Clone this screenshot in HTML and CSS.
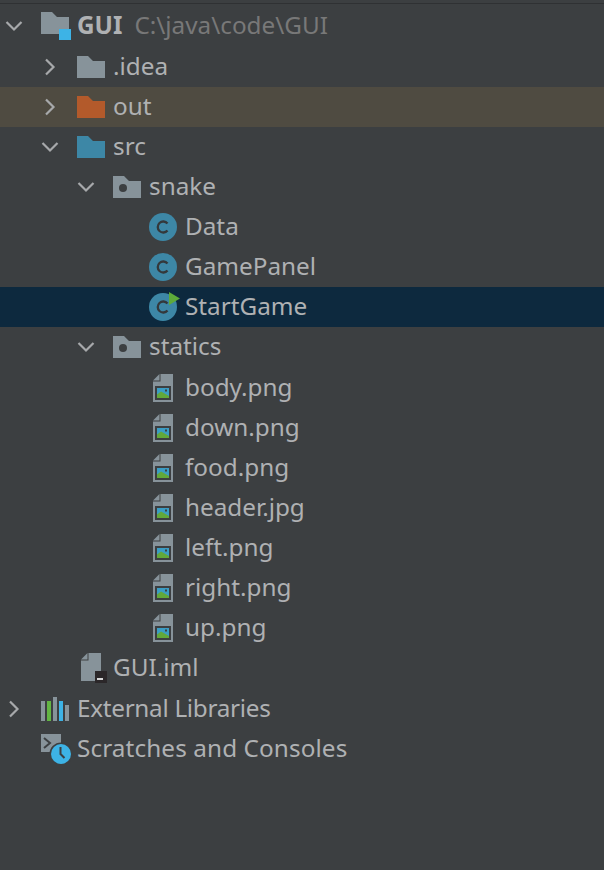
FILE: index.html
```html
<!DOCTYPE html>
<html lang="en">
<head>
  <meta charset="UTF-8">
  <meta name="viewport" content="width=device-width, initial-scale=1.0">
  <title>Project Tree</title>
  <link rel="stylesheet" href="styles.css">
</head>
<body>

  <!-- Shared icons -->
  <svg class="defs" width="0" height="0">
    <symbol id="open" viewBox="0 0 20 20"><path d="M2.500 6l7.500 7.500L17.500 6" fill="none" stroke="#a7a9ab" stroke-width="2.200"/></symbol>
    <symbol id="closed" viewBox="0 0 20 20"><path d="M6 2.500l7.500 7.500L6 17.500" fill="none" stroke="#a7a9ab" stroke-width="2.200"/></symbol>
    <symbol id="folder" viewBox="0 0 28 22"><path d="M0 0h11l5 5h12v17H0z"/></symbol>
    <symbol id="package" viewBox="0 0 28 22"><path d="M0 0h11l5 5h12v17H0z" fill="#87939a"/><circle cx="10" cy="12" r="4" fill="#3c3f41"/></symbol>
    <symbol id="class" viewBox="0 0 28 28"><circle cx="14" cy="14" r="14" fill="#3d87a6"/><path d="M18.500 10.500A5.500 5.500 0 1 0 18.500 17.500" fill="none" stroke="#34383b" stroke-width="2.300"/></symbol>
    <symbol id="image" viewBox="0 0 20 28"><path d="M7.500 0H20v28H0V7.500h7.500z" fill="#87939a"/><path d="M0 6.500L6.500 0v6.500z" fill="#87939a"/><rect x="2" y="12" width="16" height="14" fill="#3c3f41"/><rect x="4" y="14" width="12" height="10" fill="#3b9dc4"/><path d="M4 20.500l4-3 8 4.500v2H4z" fill="#62a83b"/><rect x="12" y="15.500" width="2" height="2" fill="#3c3f41"/></symbol>
  </svg>

  <div class="tree">
    <div class="row">
      <svg class="arrow lvl-0" width="20" height="20"><use href="#open"/></svg>
      <svg class="icon" width="30" height="28" viewBox="0 0 30 28">
        <path d="M0 0h11l5 5h12v17H0z" fill="#87939a"/>
        <rect x="18" y="17" width="12" height="11" fill="#3db3e6"/>
      </svg>
      <span class="name root-name">GUI</span>
      <span class="path">C:\java\code\GUI</span>
    </div>

    <div class="row">
      <svg class="arrow lvl-1" width="20" height="20"><use href="#closed"/></svg>
      <svg class="icon grey" width="28" height="22"><use href="#folder"/></svg>
      <span class="name">.idea</span>
    </div>

    <div class="row excluded">
      <svg class="arrow lvl-1" width="20" height="20"><use href="#closed"/></svg>
      <svg class="icon orange" width="28" height="22"><use href="#folder"/></svg>
      <span class="name">out</span>
    </div>

    <div class="row">
      <svg class="arrow lvl-1" width="20" height="20"><use href="#open"/></svg>
      <svg class="icon blue" width="28" height="22"><use href="#folder"/></svg>
      <span class="name">src</span>
    </div>

    <div class="row">
      <svg class="arrow lvl-2" width="20" height="20"><use href="#open"/></svg>
      <svg class="icon" width="28" height="22"><use href="#package"/></svg>
      <span class="name">snake</span>
    </div>

    <div class="row leaf">
      <svg class="icon" width="28" height="28"><use href="#class"/></svg>
      <span class="name">Data</span>
    </div>

    <div class="row leaf">
      <svg class="icon" width="28" height="28"><use href="#class"/></svg>
      <span class="name">GamePanel</span>
    </div>

    <div class="row leaf selected">
      <span class="class-run">
        <svg class="icon" width="28" height="28"><use href="#class"/></svg>
        <svg class="run" width="11" height="13" viewBox="0 0 11 13"><path d="M0 0l11 6.500L0 13z" fill="#5eaa3a"/></svg>
      </span>
      <span class="name">StartGame</span>
    </div>

    <div class="row">
      <svg class="arrow lvl-2" width="20" height="20"><use href="#open"/></svg>
      <svg class="icon" width="28" height="22"><use href="#package"/></svg>
      <span class="name">statics</span>
    </div>

    <div class="row leaf file">
      <svg class="icon" width="20" height="28"><use href="#image"/></svg>
      <span class="name">body.png</span>
    </div>
    <div class="row leaf file">
      <svg class="icon" width="20" height="28"><use href="#image"/></svg>
      <span class="name">down.png</span>
    </div>
    <div class="row leaf file">
      <svg class="icon" width="20" height="28"><use href="#image"/></svg>
      <span class="name">food.png</span>
    </div>
    <div class="row leaf file">
      <svg class="icon" width="20" height="28"><use href="#image"/></svg>
      <span class="name">header.jpg</span>
    </div>
    <div class="row leaf file">
      <svg class="icon" width="20" height="28"><use href="#image"/></svg>
      <span class="name">left.png</span>
    </div>
    <div class="row leaf file">
      <svg class="icon" width="20" height="28"><use href="#image"/></svg>
      <span class="name">right.png</span>
    </div>
    <div class="row leaf file">
      <svg class="icon" width="20" height="28"><use href="#image"/></svg>
      <span class="name">up.png</span>
    </div>

    <div class="row module">
      <svg class="icon" width="26" height="30" viewBox="0 0 26 30">
        <path d="M7.500 0H20v28H0V7.500h7.500z" fill="#87939a"/>
        <path d="M0 6.500L6.500 0v6.500z" fill="#87939a"/>
        <rect x="14" y="18" width="12" height="12" fill="#2b2729"/>
        <rect x="16" y="25" width="6" height="2" fill="#d6d6d6"/>
      </svg>
      <span class="name">GUI.iml</span>
    </div>

    <div class="row">
      <svg class="arrow lvl-0" width="20" height="20"><use href="#closed"/></svg>
      <svg class="icon" width="28" height="24" viewBox="0 0 28 24">
        <rect x="0" y="4" width="4" height="20" fill="#87939a"/>
        <rect x="6" y="4" width="4" height="20" fill="#62b543"/>
        <rect x="12" y="0" width="4" height="24" fill="#87939a"/>
        <rect x="18" y="4" width="4" height="20" fill="#3db3e6"/>
        <rect x="24" y="8" width="4" height="16" fill="#87939a"/>
      </svg>
      <span class="name ext-name">External Libraries</span>
    </div>

    <div class="row top-level">
      <svg class="icon" width="30" height="30" viewBox="0 0 30 30">
        <rect x="0" y="0" width="20" height="18" fill="#87939a"/>
        <path d="M3 4l6 5-6 5" fill="none" stroke="#3c3f41" stroke-width="2"/>
        <circle cx="20" cy="20" r="11.500" fill="#3c3f41"/>
        <circle cx="20" cy="20" r="10" fill="#3db3e6"/>
        <path d="M19.500 13v7l4 4" fill="none" stroke="#3c3f41" stroke-width="2"/>
      </svg>
      <span class="name scratch-name">Scratches and Consoles</span>
    </div>
  </div>

</body>
</html>
```

FILE: styles.css
```css
/* General Styling */
body {
  font-family: "Noto Sans", "Open Sans", sans-serif;
  background-color: #3c3f41;
  color: #afb1b3;
  margin: 0;
  padding: 0;
  height: 870px;
  overflow: hidden;
}

.defs {
  position: absolute;
}

/* Tree */
.tree {
  border-top: 1px solid #2f3133;
  margin-top: 3px;
  padding-top: 2.400px;
}

.row {
  display: flex;
  align-items: center;
  height: 40.130px;
  font-size: 24.300px;
  white-space: nowrap;
}

.row.excluded {
  background-color: #4f4b41;
}

.row.selected {
  background-color: #0d293e;
}

/* Arrows set the indent of each level */
.arrow {
  flex: none;
  margin-right: 17px;
}

.lvl-0 {
  margin-left: 4px;
}

.lvl-1 {
  margin-left: 40px;
}

.lvl-2 {
  margin-left: 76px;
}

.icon {
  flex: none;
}

.grey {
  fill: #87939a;
}

.orange {
  fill: #b35a2b;
}

.blue {
  fill: #3d87a6;
}

.name {
  margin-left: 8px;
  margin-bottom: 3px;
}

.root-name {
  margin-left: 6px;
  font-weight: bold;
}

.path {
  margin-left: 12px;
  margin-bottom: 3px;
  color: #787878;
}

/* Rows with no arrow */
.leaf {
  padding-left: 149px;
}

.file {
  padding-left: 153px;
}

.file .name {
  margin-left: 12px;
}

.module {
  padding-left: 81px;
}

.module .name {
  margin-left: 6px;
}

.ext-name {
  letter-spacing: -0.300px;
}

.top-level {
  padding-left: 41px;
}

.top-level .name {
  margin-left: 6px;
}

.scratch-name {
  letter-spacing: 0.100px;
}

.class-run {
  position: relative;
  display: flex;
}

.run {
  position: absolute;
  top: -1px;
  left: 20px;
}
```
